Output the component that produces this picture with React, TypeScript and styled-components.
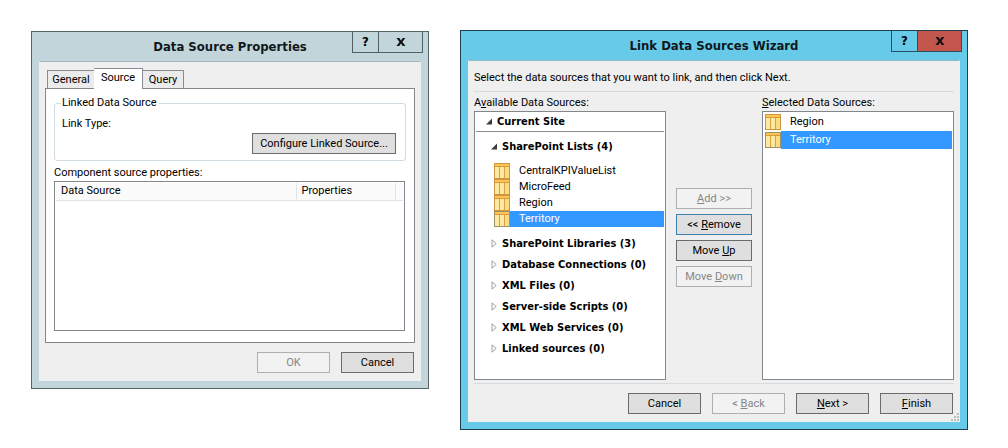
import React, { useState } from 'react';
import styled, { createGlobalStyle, css } from 'styled-components';

const bodyFont = '"Roboto", "Liberation Sans", sans-serif';
const boldFont = '"DejaVu Sans Condensed", "DejaVu Sans", sans-serif';

const GlobalStyle = createGlobalStyle`
  *, *::before, *::after { box-sizing: border-box; }
  body {
    margin: 0;
    background: #fff;
    color: #000;
    font: 11px/16px ${bodyFont};
  }
  button { font: inherit; color: inherit; }
  ul { list-style: none; margin: 0; padding: 0; }
`;

const Page = styled.main`
  display: grid;
  grid-template-columns: 398fr 508fr;
  align-items: start;
  gap: 31px;
  padding: 30px 40px 16px 31px;
`;

/* ---------- window chrome ---------- */

type Tone = 'inactive' | 'active';

const tones = {
  inactive: { frame: '#c2d5db', edge: '#576468', inner: '#a5b7bd', lines: '#4f6066', close: '#c2d5db' },
  active: { frame: '#66cae8', edge: '#1f3f4c', inner: '#8ebccb', lines: '#27505f', close: '#c3574d' },
};

const Window = styled.section<{ $tone: Tone }>`
  min-width: 0;
  border: 1px solid ${(p) => tones[p.$tone].edge};
  background: ${(p) => tones[p.$tone].frame};
  padding: 0 7px 7px;
  margin-top: ${(p) => (p.$tone === 'inactive' ? '1px' : '0')};
`;

const TitleBar = styled.header`
  display: grid;
  grid-template-columns: 1fr auto 1fr;
  align-items: start;
  height: 29px;
`;

const Title = styled.h1`
  grid-column: 2;
  margin: 0;
  padding-top: 5px;
  font: bold 13px/20px ${boldFont};
  color: #10181b;
  white-space: nowrap;
`;

const Caption = styled.div<{ $tone: Tone }>`
  display: flex;
  justify-self: end;
  margin-right: -2px;
  border: 1px solid ${(p) => tones[p.$tone].lines};
  border-top: 0;
`;

const CaptionButton = styled.button<{ $tone: Tone; $close?: boolean }>`
  display: grid;
  place-items: center;
  width: ${(p) => (p.$close ? 44 : 25)}px;
  height: 20px;
  padding: 0 0 1px;
  border: 0;
  background: ${(p) => (p.$close ? tones[p.$tone].close : 'transparent')};
  font: bold 13px/16px ${boldFont};
  ${(p) => p.$close && css`border-left: 1px solid ${tones[p.$tone].lines};`}
`;

const Body = styled.div<{ $tone: Tone }>`
  background: #efefef;
  border: 1px solid #efefef;
  border-top-color: ${(p) => tones[p.$tone].inner};
  padding: 0 5px 7px;
`;

const CloseGlyph = () => (
  <svg width="10" height="8" viewBox="0 0 10 8" aria-hidden="true">
    <path d="M0.5 0H3.3L5 2.5 6.7 0H9.3L6.4 4 9.5 8H6.7L5 5.5 3.2 8H0.4L3.5 4Z" fill="#111" />
  </svg>
);

interface FrameProps {
  title: string;
  tone: Tone;
  children: React.ReactNode;
}

const Frame = ({ title, tone, children }: FrameProps) => (
  <Window $tone={tone} role="dialog" aria-label={title}>
    <TitleBar>
      <Title>{title}</Title>
      <Caption $tone={tone}>
        <CaptionButton $tone={tone} type="button" aria-label="Help">?</CaptionButton>
        <CaptionButton $tone={tone} $close type="button" aria-label="Close"><CloseGlyph /></CaptionButton>
      </Caption>
    </TitleBar>
    <Body $tone={tone}>{children}</Body>
  </Window>
);

/* ---------- shared controls ---------- */

const PushButton = styled.button<{ $width: number; $focused?: boolean }>`
  width: ${(p) => p.$width}px;
  height: 21px;
  padding: 0;
  border: 1px solid ${(p) => (p.$focused ? '#3f7fae' : '#6b6b6b')};
  background: #dfdfdf;
  line-height: 19px;
  white-space: nowrap;
  &:disabled {
    border-color: #adb0b2;
    background: #f2f2f2;
    color: #868686;
  }
`;

const ButtonBar = styled.footer`
  display: flex;
  justify-content: flex-end;
  gap: 11px;
  margin-top: 9px;
  padding-right: 1px;
`;

/* ---------- Data Source Properties ---------- */

const TabList = styled.div`
  display: flex;
  align-items: flex-end;
  height: 26px;
  padding-left: 2px;
`;

const Tab = styled.button<{ $selected: boolean; $width: number }>`
  width: ${(p) => p.$width}px;
  height: 18px;
  padding: 0;
  border: 1px solid #898c95;
  border-bottom: 0;
  background: #ebebeb;
  line-height: 18px;
  & + & { border-left: 0; }
  ${(p) => p.$selected && css`
    && {
      height: 21px;
      padding-bottom: 3px;
      margin: 0 0 -1px -1px;
      border-left: 1px solid #898c95;
      background: #fff;
      position: relative;
    }
  `}
`;

const TabPanel = styled.div`
  border: 1px solid #83868b;
  background: #fff;
  padding: 6px 8px 11px;
`;

const Group = styled.fieldset`
  margin: 0;
  padding: 0 9px 6px 7px;
  border: 1px solid #d0dbe2;
  border-radius: 3px;
  min-width: 0;
`;

const Legend = styled.legend`
  padding: 0 2px 0 1px;
  margin-left: -1px;
  line-height: 16px;
`;

const GroupText = styled.p`
  margin: 5px 0 1px;
`;

const GroupActions = styled.div`
  display: flex;
  justify-content: flex-end;
`;

const PropsLabel = styled.h2`
  margin: 4px 0 0;
  font: inherit;
`;

const TableBox = styled.div`
  height: 150px;
  margin-right: 1px;
  border: 1px solid #83868b;
  padding: 1px;
`;

const Table = styled.table`
  width: 100%;
  border-collapse: collapse;
  table-layout: fixed;
`;

const HeadCell = styled.th<{ $width?: number }>`
  width: ${(p) => (p.$width ? `${p.$width}px` : 'auto')};
  height: 17px;
  padding: 0 0 0 5px;
  border: 1px solid #e3e3e3;
  border-width: 0 1px 1px 0;
  background: #fbfbfb;
  font-weight: normal;
  text-align: left;
  line-height: 16px;
  &:last-child { border-right: 0; }
`;

const tabs = [
  { name: 'General', width: 48 },
  { name: 'Source', width: 49 },
  { name: 'Query', width: 41 },
];

const PropertiesDialog = () => {
  const [tab, setTab] = useState('Source');
  return (
    <Frame title="Data Source Properties" tone="inactive">
      <TabList role="tablist">
        {tabs.map((t) => (
          <Tab
            key={t.name}
            type="button"
            role="tab"
            aria-selected={tab === t.name}
            $selected={tab === t.name}
            $width={t.width}
            onClick={() => setTab(t.name)}
          >
            {t.name}
          </Tab>
        ))}
      </TabList>
      <TabPanel role="tabpanel">
        <Group>
          <Legend>Linked Data Source</Legend>
          <GroupText>Link Type:</GroupText>
          <GroupActions>
            <PushButton $width={144} type="button">Configure Linked Source...</PushButton>
          </GroupActions>
        </Group>
        <PropsLabel id="props-label">Component source properties:</PropsLabel>
        <TableBox>
          <Table aria-labelledby="props-label">
            <thead>
              <tr>
                <HeadCell scope="col">Data Source</HeadCell>
                <HeadCell scope="col" $width={99}>Properties</HeadCell>
                <HeadCell as="td" $width={8} />
              </tr>
            </thead>
          </Table>
        </TableBox>
      </TabPanel>
      <ButtonBar>
        <PushButton $width={73} type="button" disabled>OK</PushButton>
        <PushButton $width={73} type="button">Cancel</PushButton>
      </ButtonBar>
    </Frame>
  );
};

/* ---------- Link Data Sources Wizard ---------- */

const Intro = styled.p`
  margin: 0;
  padding: 9px 0 5px;
  border-bottom: 1px solid #dadada;
`;

const Columns = styled.div`
  display: grid;
  grid-template-columns: 2fr 1fr 2fr;
  padding: 2px 0 3px;
  border-bottom: 1px solid #d5dde0;
`;

const Column = styled.section`
  min-width: 0;
`;

const ColumnLabel = styled.h2`
  margin: 0;
  font: inherit;
  line-height: 17px;
`;

const ListBox = styled.div`
  height: 269px;
  border: 1px solid #83868b;
  background: #fff;
  padding: 1px;
`;

const Moves = styled.div`
  display: flex;
  flex-direction: column;
  align-items: center;
  gap: 5px;
  padding: 94px 0 0;
`;

const RootNode = styled.div`
  padding: 0 0 1px 10px;
  border-bottom: 1px solid #8d8d8d;
  margin-bottom: 4px;
`;

const Branches = styled.ul`
  padding-left: 15px;
`;

const NodeButton = styled.button`
  display: flex;
  align-items: center;
  gap: 4px;
  height: 21px;
  padding: 0;
  border: 0;
  background: none;
  font: bold 11px/16px ${boldFont};
  white-space: nowrap;
`;

const RootButton = styled(NodeButton)`
  height: 17px;
`;

const Leaves = styled.ul`
  padding: 6px 0 6px 3px;
`;

const Chosen = styled.ul`
  padding-left: 1px;
`;

const Item = styled.li<{ $selected?: boolean; $height: number }>`
  display: flex;
  align-items: center;
  height: ${(p) => p.$height}px;
  svg { flex: none; }
  span {
    flex: 1;
    align-self: stretch;
    padding-left: 9px;
    line-height: ${(p) => p.$height - 1}px;
    ${(p) => p.$selected && css`
      background: #3398ff;
      color: #fff;
    `}
  }
`;

const Arrow = ({ open }: { open?: boolean }) => (
  <svg width="7" height="9" viewBox="0 0 7 9" aria-hidden="true">
    {open
      ? <path d="M6 1.5V7.5H0Z" fill="#3c3c3c" />
      : <path d="M1 0.8V8.2L5.2 4.5Z" fill="#fff" stroke="#a0a0a0" />}
  </svg>
);

const ListIcon = ({ muted }: { muted?: boolean }) => (
  <svg width="16" height="16" viewBox="0 0 16 16" aria-hidden="true">
    <rect x="0.5" y="0.5" width="15" height="15" fill="#fbdc80" stroke={muted ? '#9c9468' : '#cf9440'} />
    <rect x="1" y="1" width="14" height="2" fill="#fbc654" />
    <rect x="1" y="3" width="14" height="1" fill="#d9983a" />
    <rect x="1" y="4" width="4" height="11" fill="#fdeaa2" />
    <rect x="6" y="4" width="4" height="11" fill="#fdeaa2" />
    <rect x="11" y="4" width="4" height="11" fill="#fbdc80" />
    <path d="M5.5 4V15M10.5 4V15" stroke="#d7a245" />
  </svg>
);

const Resize = styled.div`
  display: flex;
  justify-content: flex-end;
  height: 8px;
  margin: -1px -5px -7px 0;
`;

const ResizeGrip = () => (
  <Resize>
    <svg width="9" height="8" viewBox="0 0 9 8" aria-hidden="true">
      <path
        d="M7 0h2v2h-2zM4 3h2v2h-2zM7 3h2v2h-2zM1 6h2v2h-2zM4 6h2v2h-2zM7 6h2v2h-2z"
        fill="#bdbdbd"
      />
    </svg>
  </Resize>
);

const lists = ['CentralKPIValueList', 'MicroFeed', 'Region', 'Territory'];
const groups = [
  'SharePoint Libraries (3)',
  'Database Connections (0)',
  'XML Files (0)',
  'Server-side Scripts (0)',
  'XML Web Services (0)',
  'Linked sources (0)',
];
const selected = ['Region', 'Territory'];

const SourceItem = ({ name, height }: { name: string; height: number }) => {
  const active = name === 'Territory';
  return (
    <Item role="option" aria-selected={active} $selected={active} $height={height}>
      <ListIcon muted={active} />
      <span>{name}</span>
    </Item>
  );
};

const WizardDialog = () => (
  <Frame title="Link Data Sources Wizard" tone="active">
    <Intro>Select the data sources that you want to link, and then click Next.</Intro>
    <Columns>
      <Column>
        <ColumnLabel>A<u>v</u>ailable Data Sources:</ColumnLabel>
        <ListBox>
          <RootNode>
            <RootButton type="button" aria-expanded="true"><Arrow open />Current Site</RootButton>
          </RootNode>
          <Branches>
            <li>
              <NodeButton type="button" aria-expanded="true"><Arrow open />SharePoint Lists (4)</NodeButton>
              <Leaves role="listbox" aria-label="SharePoint Lists">
                {lists.map((name) => <SourceItem key={name} name={name} height={16} />)}
              </Leaves>
            </li>
            {groups.map((name) => (
              <li key={name}>
                <NodeButton type="button" aria-expanded="false"><Arrow />{name}</NodeButton>
              </li>
            ))}
          </Branches>
        </ListBox>
      </Column>
      <Moves>
        <PushButton $width={76} type="button" disabled><u>A</u>dd &gt;&gt;</PushButton>
        <PushButton $width={76} type="button" $focused>&lt;&lt; <u>R</u>emove</PushButton>
        <PushButton $width={76} type="button">Move <u>U</u>p</PushButton>
        <PushButton $width={76} type="button" disabled>Move <u>D</u>own</PushButton>
      </Moves>
      <Column>
        <ColumnLabel><u>S</u>elected Data Sources:</ColumnLabel>
        <ListBox>
          <Chosen role="listbox" aria-label="Selected Data Sources">
            {selected.map((name) => <SourceItem key={name} name={name} height={18} />)}
          </Chosen>
        </ListBox>
      </Column>
    </Columns>
    <ButtonBar>
      <PushButton $width={73} type="button">Cancel</PushButton>
      <PushButton $width={73} type="button" disabled>&lt; <u>B</u>ack</PushButton>
      <PushButton $width={73} type="button"><u>N</u>ext &gt;</PushButton>
      <PushButton $width={73} type="button"><u>F</u>inish</PushButton>
    </ButtonBar>
    <ResizeGrip />
  </Frame>
);

export default function App() {
  return (
    <>
      <GlobalStyle />
      <Page>
        <PropertiesDialog />
        <WizardDialog />
      </Page>
    </>
  );
}
